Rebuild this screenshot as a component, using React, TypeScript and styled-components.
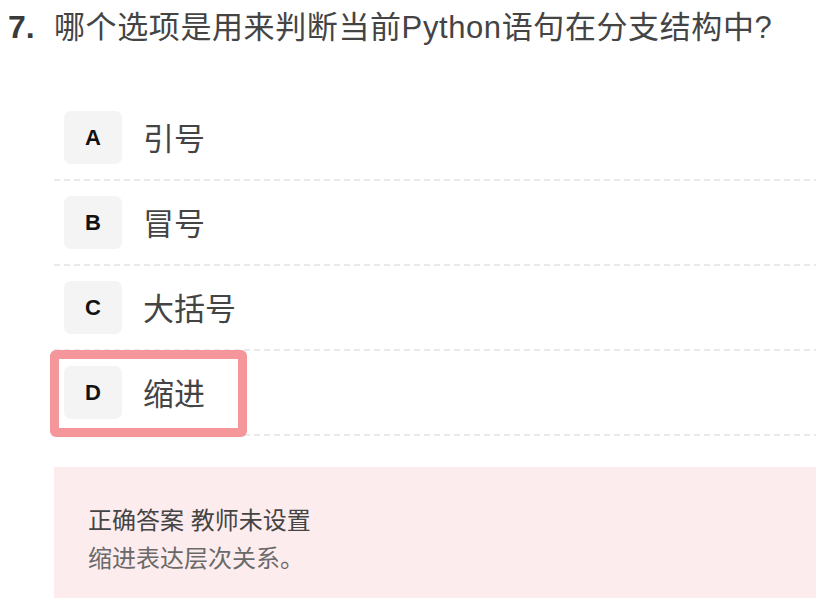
import React from "react";
import styled, { createGlobalStyle } from "styled-components";

const GlobalStyle = createGlobalStyle`
  html, body {
    margin: 0;
    padding: 0;
    background: #ffffff;
  }
  body {
    font-family: "Liberation Sans", "Noto Sans CJK SC", sans-serif;
    overflow: hidden;
  }
`;

const Page = styled.div`
  width: 816px;
  height: 598px;
  overflow: hidden;
`;

const Title = styled.div`
  display: flex;
  align-items: baseline;
  padding: 7px 0 0 8px;
  height: 96px;
  box-sizing: border-box;
  color: #444444;
`;

const Number = styled.span`
  width: 46px;
  font-size: 32px;
  font-weight: 700;
  line-height: 40px;
  color: #3a3a3a;
`;

const Question = styled.span`
  font-size: 31px;
  line-height: 40px;
  white-space: nowrap;
  letter-spacing: 0.6px;
`;

const List = styled.div`
  margin-left: 54px;
  display: flex;
  flex-direction: column;
`;

const Row = styled.div<{ $selected?: boolean }>`
  position: relative;
  display: flex;
  align-items: center;
  gap: 21px;
  padding: 15px 10px 17px;
  background-image: repeating-linear-gradient(
    to right,
    #e9e9e9 0 6px,
    transparent 6px 10px
  );
  background-size: 100% 2px;
  background-position: left bottom;
  background-repeat: no-repeat;

  ${(p) =>
    p.$selected &&
    `
    &::after {
      content: "";
      position: absolute;
      left: -4px;
      top: -1px;
      width: 197px;
      height: 87px;
      box-sizing: border-box;
      border: 9px solid #f5969b;
      border-radius: 6px;
    }
  `}
`;

const Badge = styled.div`
  width: 58px;
  height: 53px;
  border-radius: 7px;
  background: #f4f4f4;
  display: flex;
  align-items: center;
  justify-content: center;
  font-size: 22px;
  font-weight: 700;
  color: #111111;
`;

const OptionText = styled.div`
  font-size: 31px;
  color: #444444;
  line-height: 40px;
  margin-top: 5px;
`;

const Answer = styled.div`
  margin: 31px 0 0 54px;
  padding: 35px 34px 40px;
  background: #fdeced;
  display: flex;
  flex-direction: column;
`;

const AnswerLine = styled.div<{ $muted?: boolean }>`
  font-size: 24px;
  line-height: 38px;
  color: ${(p) => (p.$muted ? "#6a6a6a" : "#444444")};
`;

const options = [
  { key: "A", text: "引号" },
  { key: "B", text: "冒号" },
  { key: "C", text: "大括号" },
  { key: "D", text: "缩进", selected: true },
];

export default function App() {
  return (
    <Page>
      <GlobalStyle />
      <Title>
        <Number>7.</Number>
        <Question>哪个选项是用来判断当前Python语句在分支结构中?</Question>
      </Title>
      <List>
        {options.map((o) => (
          <Row key={o.key} $selected={o.selected}>
            <Badge>{o.key}</Badge>
            <OptionText>{o.text}</OptionText>
          </Row>
        ))}
      </List>
      <Answer>
        <AnswerLine>正确答案 教师未设置</AnswerLine>
        <AnswerLine $muted>缩进表达层次关系。</AnswerLine>
      </Answer>
    </Page>
  );
}
